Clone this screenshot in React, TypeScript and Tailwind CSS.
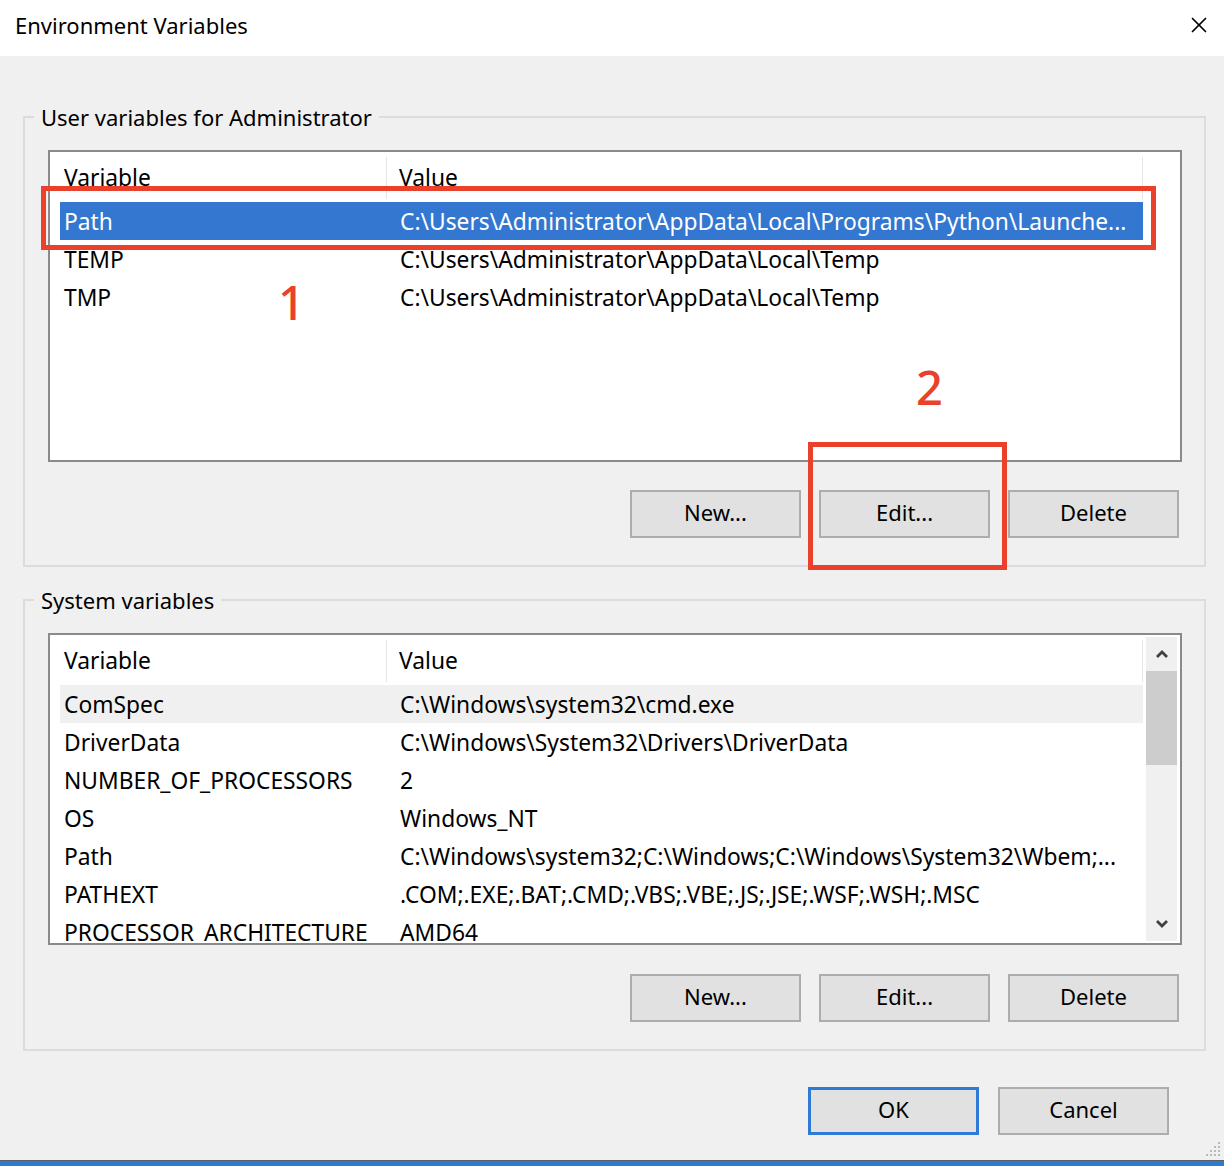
import { X } from 'lucide-react';

type Row = { name: string; value: string };

const userVars: Row[] = [
  { name: 'Path', value: 'C:\\Users\\Administrator\\AppData\\Local\\Programs\\Python\\Launche...' },
  { name: 'TEMP', value: 'C:\\Users\\Administrator\\AppData\\Local\\Temp' },
  { name: 'TMP', value: 'C:\\Users\\Administrator\\AppData\\Local\\Temp' },
];

const systemVars: Row[] = [
  { name: 'ComSpec', value: 'C:\\Windows\\system32\\cmd.exe' },
  { name: 'DriverData', value: 'C:\\Windows\\System32\\Drivers\\DriverData' },
  { name: 'NUMBER_OF_PROCESSORS', value: '2' },
  { name: 'OS', value: 'Windows_NT' },
  { name: 'Path', value: 'C:\\Windows\\system32;C:\\Windows;C:\\Windows\\System32\\Wbem;...' },
  { name: 'PATHEXT', value: '.COM;.EXE;.BAT;.CMD;.VBS;.VBE;.JS;.JSE;.WSF;.WSH;.MSC' },
  { name: 'PROCESSOR_ARCHITECTURE', value: 'AMD64' },
];

function Chevron({ up }: { up?: boolean }) {
  return (
    <svg width="14" height="10" viewBox="0 0 14 10">
      <polyline
        points={up ? '2,8 7,3 12,8' : '2,2 7,7 12,2'}
        fill="none"
        stroke="#404040"
        strokeWidth="2.8"
      />
    </svg>
  );
}

function ListView({
  rows,
  selected,
  hovered,
  scrollbar,
}: {
  rows: Row[];
  selected?: number;
  hovered?: number;
  scrollbar?: boolean;
}) {
  return (
    <div className="h-[312px] border-2 border-[#8a8a8a] bg-white flex overflow-hidden text-[22.8px]">
      <div className="ml-[10px] w-[1083px] shrink-0 flex flex-col">
        <div className="h-[50px] flex items-center shrink-0">
          <div className="w-[327px] h-[42px] mt-[2px] pl-[4px] flex items-center border-r border-[#e5e5e5]">
            Variable
          </div>
          <div className="flex-1 h-[42px] mt-[2px] pl-[12px] flex items-center border-r border-[#e5e5e5]">
            Value
          </div>
        </div>
        {rows.map((r, i) => (
          <div
            key={r.name}
            className={`h-[38px] shrink-0 flex items-center pt-[2px] whitespace-nowrap ${
              i === selected ? 'bg-[#3377d0] text-white' : i === hovered ? 'bg-[#f0f0f0]' : ''
            }`}
          >
            <div className="w-[327px] pl-[4px]">{r.name}</div>
            <div className="flex-1 pl-[13px]">{r.value}</div>
          </div>
        ))}
      </div>
      {scrollbar && (
        <div className="ml-[3px] my-[2px] w-[31px] bg-[#f0f0f0] flex flex-col">
          <div className="h-[34px] flex items-center justify-center">
            <Chevron up />
          </div>
          <div className="h-[94px] bg-[#cdcdcd]" />
          <div className="flex-1" />
          <div className="h-[34px] flex items-center justify-center">
            <Chevron />
          </div>
        </div>
      )}
    </div>
  );
}

function Button({ label, primary }: { label: string; primary?: boolean }) {
  return (
    <button
      className={`w-[171px] h-[48px] bg-[#e1e1e1] flex items-center justify-center pb-[3px] ${
        primary ? 'border-[3px] border-[#2f7ad4]' : 'border-2 border-[#adadad]'
      }`}
    >
      {label}
    </button>
  );
}

function Group({ title, children }: { title: string; children: React.ReactNode }) {
  return (
    <fieldset className="border-2 border-[#dcdcdc] px-0 min-w-0">
      <legend className="ml-[9px] px-[7px] leading-[30px]">{title}</legend>
      <div className="pt-[18px] pb-[27px] pl-[23px] pr-[22px]">{children}</div>
    </fieldset>
  );
}

export default function App() {
  return (
    <div className="relative w-[1224px] h-[1166px] flex flex-col text-[22px] text-black font-['Noto_Sans',sans-serif] overflow-hidden">
      <div className="h-[56px] shrink-0 bg-white flex items-center justify-between pl-[15px] pr-[12px]">
        <span className="-mt-[6px]">Environment Variables</span>
        <X className="w-[26px] h-[26px] -mt-[6px]" strokeWidth={1.6} />
      </div>

      <div className="relative flex-1 bg-[#f0f0f0] px-[23px] pr-[18px] flex flex-col">
        <div className="mt-[46px]">
          <Group title="User variables for Administrator">
            <ListView rows={userVars} selected={0} />
            <div className="mt-[28px] flex justify-end gap-[18px] pr-[3px]">
              <Button label="New..." />
              <Button label="Edit..." />
              <Button label="Delete" />
            </div>
          </Group>
        </div>

        <div className="mt-[18px]">
          <Group title="System variables">
            <ListView rows={systemVars} hovered={0} scrollbar />
            <div className="mt-[29px] flex justify-end gap-[18px] pr-[3px]">
              <Button label="New..." />
              <Button label="Edit..." />
              <Button label="Delete" />
            </div>
          </Group>
        </div>

        <div className="mt-[36px] flex justify-end gap-[19px] pr-[37px]">
          <Button label="OK" primary />
          <Button label="Cancel" />
        </div>

        <svg className="absolute right-[2px] bottom-[2px]" width="18" height="18" viewBox="0 0 18 18">
          {[
            [14, 2],
            [10, 6],
            [14, 6],
            [6, 10],
            [10, 10],
            [14, 10],
            [2, 14],
            [6, 14],
            [10, 14],
            [14, 14],
          ].map(([x, y]) => (
            <rect key={`${x}-${y}`} x={x} y={y} width="2" height="2" fill="#b9b9b9" />
          ))}
        </svg>
      </div>

      <div className="h-[1px] shrink-0 bg-[#5e5e5e]" />
      <div className="h-[5px] shrink-0 bg-[#2b7bd4]" />

      {/* annotations */}
      <div className="absolute left-[41px] top-[186px] w-[1115px] h-[64px] border-[5px] border-[#e9412b]" />
      <div className="absolute left-[808px] top-[442px] w-[199px] h-[128px] border-[5px] border-[#e9412b]" />
      <span className="absolute left-[278px] top-[279px] text-[47px] font-medium leading-none text-[#e9412b]">1</span>
      <span className="absolute left-[916px] top-[364px] text-[47px] font-medium leading-none text-[#e9412b]">2</span>
    </div>
  );
}
